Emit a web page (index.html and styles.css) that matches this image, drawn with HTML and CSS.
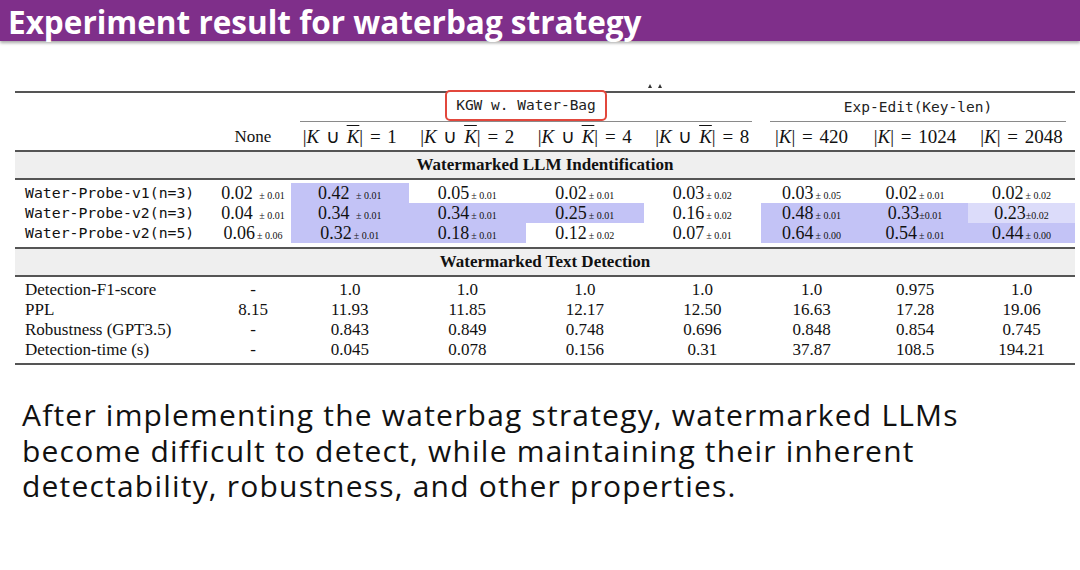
FILE: index.html
```html
<!DOCTYPE html>
<html>
<head>
<meta charset="utf-8">
<link rel="stylesheet" href="styles.css">
</head>
<body>
<header class="titlebar"><h1 class="title">Experiment result for waterbag strategy</h1></header>
<main class="content">
  <div class="marks"><span class="tri"></span><span class="tri"></span></div>
  <table class="results">
    <colgroup>
      <col class="c-label"><col class="c-none"><col class="c-k"><col class="c-k"><col class="c-k"><col class="c-k"><col class="c-e1"><col class="c-e2"><col class="c-e3">
    </colgroup>
    <thead>
      <tr class="group">
        <th></th><th></th>
        <th colspan="4"><div class="cmid cmid-kgw"><span class="kgwbox">KGW w. Water-Bag</span></div></th>
        <th colspan="3"><div class="cmid cmid-exp"><span class="mono-h">Exp-Edit(Key-len)</span></div></th>
      </tr>
      <tr class="heads">
        <th></th>
        <th class="plain">None</th>
        <th>|<i>K</i> ∪ <i class="ov">K</i>| = 1</th>
        <th>|<i>K</i> ∪ <i class="ov">K</i>| = 2</th>
        <th>|<i>K</i> ∪ <i class="ov">K</i>| = 4</th>
        <th>|<i>K</i> ∪ <i class="ov">K</i>| = 8</th>
        <th>|<i>K</i>| = 420</th>
        <th>|<i>K</i>| = 1024</th>
        <th>|<i>K</i>| = 2048</th>
      </tr>
    </thead>
    <tbody>
      <tr class="section"><td colspan="9">Watermarked LLM Indentification</td></tr>
      <tr class="spacer"><td colspan="9"></td></tr>
      <tr class="data">
        <td class="label mono">Water-Probe-v1(n=3)</td>
        <td>0.02 <small>± 0.01</small></td>
        <td class="hl">0.42 <small>± 0.01</small></td>
        <td>0.05<small>± 0.01</small></td>
        <td>0.02<small>± 0.01</small></td>
        <td>0.03<small>± 0.02</small></td>
        <td>0.03<small>± 0.05</small></td>
        <td>0.02<small>± 0.01</small></td>
        <td>0.02<small>± 0.02</small></td>
      </tr>
      <tr class="data">
        <td class="label mono">Water-Probe-v2(n=3)</td>
        <td>0.04 <small>± 0.01</small></td>
        <td class="hl">0.34 <small>± 0.01</small></td>
        <td class="hl">0.34<small>± 0.01</small></td>
        <td class="hl">0.25<small>± 0.01</small></td>
        <td>0.16<small>± 0.02</small></td>
        <td class="hl">0.48<small>± 0.01</small></td>
        <td class="hl">0.33<small class="tight">±0.01</small></td>
        <td class="hl-light">0.23<small class="tight">±0.02</small></td>
      </tr>
      <tr class="data">
        <td class="label mono">Water-Probe-v2(n=5)</td>
        <td>0.06<small>± 0.06</small></td>
        <td class="hl">0.32<small>± 0.01</small></td>
        <td class="hl">0.18<small>± 0.01</small></td>
        <td>0.12<small>± 0.02</small></td>
        <td>0.07<small>± 0.01</small></td>
        <td class="hl">0.64<small>± 0.00</small></td>
        <td class="hl">0.54<small>± 0.01</small></td>
        <td class="hl">0.44<small>± 0.00</small></td>
      </tr>
      <tr class="spacer tall"><td colspan="9"></td></tr>
      <tr class="section"><td colspan="9">Watermarked Text Detection</td></tr>
      <tr class="spacer"><td colspan="9"></td></tr>
      <tr class="data2">
        <td class="label">Detection-F1-score</td><td>-</td><td>1.0</td><td>1.0</td><td>1.0</td><td>1.0</td><td>1.0</td><td>0.975</td><td>1.0</td>
      </tr>
      <tr class="data2">
        <td class="label">PPL</td><td>8.15</td><td>11.93</td><td>11.85</td><td>12.17</td><td>12.50</td><td>16.63</td><td>17.28</td><td>19.06</td>
      </tr>
      <tr class="data2">
        <td class="label">Robustness (GPT3.5)</td><td>-</td><td>0.843</td><td>0.849</td><td>0.748</td><td>0.696</td><td>0.848</td><td>0.854</td><td>0.745</td>
      </tr>
      <tr class="data2">
        <td class="label">Detection-time (s)</td><td>-</td><td>0.045</td><td>0.078</td><td>0.156</td><td>0.31</td><td>37.87</td><td>108.5</td><td>194.21</td>
      </tr>
      <tr class="spacer"><td colspan="9"></td></tr>
    </tbody>
  </table>
  <p class="summary">After implementing the waterbag strategy, watermarked LLMs<br>become difficult to detect, while maintaining their inherent<br>detectability, robustness, and other properties.</p>
</main>
</body>
</html>
```

FILE: styles.css
```css
html, body {
  margin: 0;
  padding: 0;
  background: #ffffff;
}
body {
  width: 1080px;
  height: 570px;
  overflow: hidden;
  font-family: "Liberation Serif", "Times New Roman", serif;
  color: #111;
}
.titlebar {
  background: #7f2f8a;
  height: 41px;
  box-shadow: 0 2px 3px rgba(0, 0, 0, 0.35);
  display: flex;
  align-items: center;
  padding-left: 8px;
}
.title {
  margin: 0;
  color: #ffffff;
  font-family: "Open Sans", "Noto Sans", sans-serif;
  font-weight: 700;
  font-size: 31.5px;
  line-height: 41px;
  letter-spacing: 0;
  position: relative;
  top: 1px;
}
.content {
  padding: 0 5px 0 15px;
}
.marks {
  height: 50px;
  display: flex;
  align-items: flex-end;
  gap: 6px;
  padding-left: 633px;
  box-sizing: border-box;
  padding-bottom: 3px;
}
.tri {
  width: 0;
  height: 0;
  border-left: 2.5px solid transparent;
  border-right: 2.5px solid transparent;
  border-bottom: 4px solid #333;
}
.results {
  width: 1060px;
  border-collapse: collapse;
  table-layout: fixed;
  border-top: 2px solid #555;
  border-bottom: 2px solid #555;
  font-size: 17px;
}
.c-label { width: 200px; }
.c-none { width: 76px; }
.c-k { width: 117.5px; }
.c-e1 { width: 101px; }
.c-e2 { width: 106px; }
.c-e3 { width: 107px; }
.results th, .results td {
  padding: 0;
  text-align: center;
  font-weight: 400;
  white-space: nowrap;
}
.group th {
  height: 29px;
  vertical-align: bottom;
}
.cmid {
  border-bottom: 1px solid #8a8a8a;
  height: 28px;
  display: flex;
  justify-content: center;
  align-items: flex-end;
}
.cmid-kgw { margin: 0 9px 0 9px; }
.cmid-exp { margin: 0 9px 0 9px; }
.kgwbox {
  display: inline-block;
  box-sizing: border-box;
  height: 31px;
  margin-bottom: -1px;
  padding: 0 9px;
  border: 2px solid #e2473c;
  border-radius: 5px;
  font-family: "DejaVu Sans Mono", "Liberation Mono", monospace;
  font-size: 14.5px;
  line-height: 27px;
  color: #222;
  position: relative;
  top: -1px;
  background: #fff;
}
.mono-h {
  font-family: "DejaVu Sans Mono", "Liberation Mono", monospace;
  font-size: 14.5px;
  line-height: 27px;
  color: #222;
}
.heads th {
  height: 27px;
  font-size: 19px;
  word-spacing: 2px;
  border-bottom: 2px solid #555;
  padding-top: 1px;
}
.heads th.plain { font-size: 17px; }
.heads i { font-style: italic; }
.heads i.ov {
  text-decoration: overline;
  text-decoration-thickness: 1px;
}
.section td {
  background: #efefef;
  font-weight: 700;
  font-size: 17px;
  height: 26px;
  border-bottom: 2px solid #555;
}
.spacer td { height: 3px; line-height: 0; font-size: 0; }
.spacer.tall td { height: 4px; }
.spacer + .section td { border-top: 2px solid #555; }
.data td {
  height: 20px;
  line-height: 20px;
  font-size: 18px;
}
.data2 td {
  height: 20px;
  line-height: 20px;
  font-size: 17px;
}
.label {
  text-align: left !important;
  padding-left: 10px !important;
}
.mono {
  font-family: "DejaVu Sans Mono", "Liberation Mono", monospace;
  font-size: 14.8px !important;
}
.data small {
  font-size: 10px;
  line-height: 1;
  margin-left: 2px;
}
.data small.tight { margin-left: 0; }
.hl { background: #c3c3f6; }
.hl-light { background: #dcdcfa; }
.summary {
  margin: 32px 0 0 7px;
  font-family: "Open Sans", "Noto Sans", sans-serif;
  font-size: 30px;
  line-height: 35.5px;
  letter-spacing: 1.2px;
  color: #111;
  white-space: nowrap;
}
```
